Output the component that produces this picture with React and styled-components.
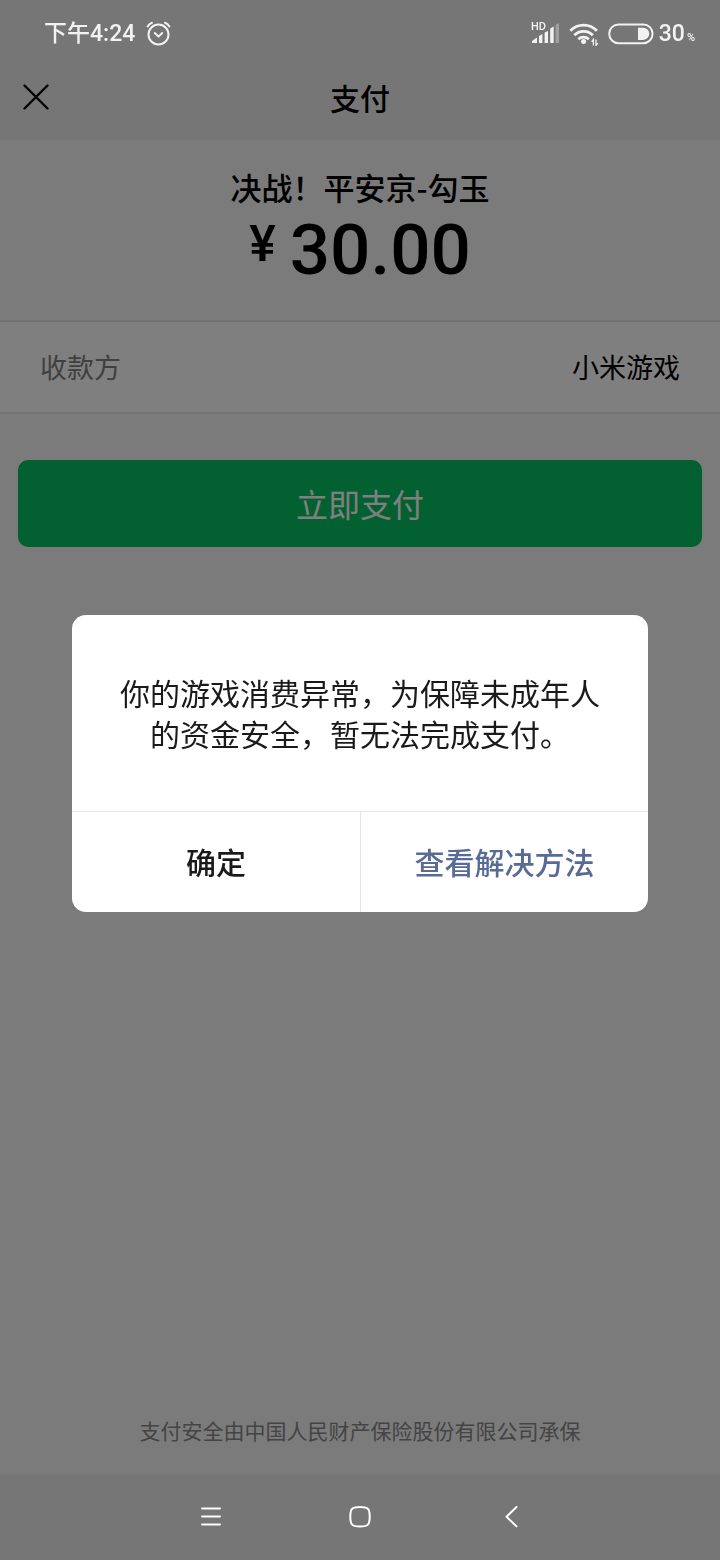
import React, { useState } from 'react'
import styled, { createGlobalStyle } from "styled-components";

const GlobalStyle = createGlobalStyle`
    * {
        box-sizing: border-box;
    }

    body {
        margin: 0;
        background-color: #f6f6f6;
        font-family: "Noto Sans CJK SC", sans-serif;
    }
`


const Page = styled.div`
    min-height: 100vh;
    background-color: #f6f6f6;
    color: #000;

    display: flex;
    flex-direction: column;
`


const StatusBar = styled.div`
    height: 56px;
    padding: 12px 25px 0 44px;
    background-color: #ededed;
    color: #f2f2f2;

    display: flex;
    align-items: center;
    justify-content: space-between;
`


const StatusGroup = styled.div`
    position: relative;
    z-index: 2;

    display: flex;
    align-items: center;
    gap: ${props => props.$gap};
`


const StatusText = styled.span`
    font-family: Roboto, "Noto Sans CJK SC", sans-serif;
    font-size: 23px;
    font-weight: 500;
    line-height: 24px;
`


const Percent = styled(StatusText)`
    font-size: 11px;
    line-height: 16px;
`


const Battery = styled.div`
    display: flex;
    align-items: flex-end;
    gap: 2px;
`


const Header = styled.header`
    height: 84px;
    padding: 0 16px 2px;
    background-color: #ededed;

    display: grid;
    grid-template-columns: 40px 1fr 40px;
    align-items: center;
`


const NakedButton = styled.button`
    padding: 0;
    border: none;
    background: none;
    color: inherit;
    font-family: inherit;
    cursor: pointer;
`


const IconButton = styled(NakedButton)`
    height: 40px;

    display: flex;
    align-items: center;
    justify-content: center;
`


const Title = styled.h1`
    margin: 0;
    font-size: 30px;
    font-weight: 500;
    line-height: 40px;
    text-align: center;
`


const Summary = styled.section`
    padding: 25px 20px 32px;
    text-align: center;
`


const Product = styled.h2`
    margin: 0 0 3px;
    font-size: 31px;
    font-weight: 500;
    line-height: 44px;
`


const Price = styled.div`
    font-family: Roboto, sans-serif;
    font-size: 71px;
    font-weight: 500;
    line-height: 76px;

    display: flex;
    justify-content: center;
    gap: 14px;
`


const Currency = styled.span`
    font-size: 50px;
    line-height: 64px;
`


const Row = styled.dl`
    height: 94px;
    margin: 0;
    padding: 0 40px;
    background-color: #fff;
    border-top: 2px solid #e4e4e4;
    border-bottom: 2px solid #e8e8e8;
    font-size: 27px;
    line-height: 40px;

    display: flex;
    align-items: center;
    justify-content: space-between;
`


const Label = styled.dt`
    color: #808080;
`


const Value = styled.dd`
    margin: 0;
`


const PayButton = styled(NakedButton)`
    height: 87px;
    margin: 46px 18px 0;
    padding-bottom: 2px;
    border-radius: 10px;
    background-color: #07c160;
    color: #fff;
    font-size: 32px;
`


const Footer = styled.footer`
    margin-top: auto;
    padding-bottom: 28px;
    color: #888;
    font-size: 21px;
    line-height: 32px;
    text-align: center;
`


const NavBar = styled.nav`
    height: 86px;
    background-color: #ededed;
    color: #fff;

    display: flex;
    justify-content: center;
    align-items: center;
    gap: 102px;
`


const NavButton = styled(IconButton)`
    position: relative;
    z-index: 2;
    width: 48px;
`


const Overlay = styled.div`
    position: fixed;
    inset: 0;
    z-index: 1;
    padding: 53px 10% 86px;
    background-color: rgba(0, 0, 0, 0.5);

    display: flex;
    align-items: center;
    justify-content: center;
`


const Dialog = styled.div`
    width: 100%;
    border-radius: 14px;
    background-color: #fff;
    color: #1a1a1a;
    overflow: hidden;
`


const Message = styled.p`
    margin: 0;
    padding: 57px 46px;
    font-size: 30px;
    line-height: 41px;
    text-align: center;
`


const Actions = styled.div`
    border-top: 1px solid #e5e5e5;

    display: grid;
    grid-template-columns: 1fr 1fr;
`


const ActionButton = styled(NakedButton)`
    height: 100px;
    padding-bottom: 2px;
    color: ${props => props.$color || "#1a1a1a"};
    font-size: 30px;
    font-weight: 500;

    & + & {
        border-left: 1px solid #e5e5e5;
    }
`


const AlarmIcon = () => (
    <svg width="26" height="26" viewBox="0 0 26 26" fill="none" stroke="currentColor" strokeWidth="2" strokeLinecap="round" strokeLinejoin="round" aria-hidden="true">
        <circle cx="12.5" cy="13.5" r="10" />
        <path d="M8.8 12l3.7 3.6 3.7-3.6" />
        <path d="M1.6 5.4Q3 2.9 6 1.8M23.4 5.4Q22 2.9 19 1.8" />
    </svg>
)

const SignalIcon = () => (
    <svg width="30" height="34" viewBox="0 -5 30 34" fill="currentColor" aria-hidden="true">
        <text x="1" y="8" fontFamily="Roboto, sans-serif" fontSize="11" fontWeight="500">HD</text>
        <path d="M2 21v-2l5-3.5V21zM9 21v-7l3.4-2v9zM14.6 21V10.6L18 9v12zM20.2 21V6.5l3.5-2V21z" />
        <path opacity="0.35" d="M25.6 21V3l3.4-2v20z" />
    </svg>
)

const WifiIcon = () => (
    <svg width="30" height="24" viewBox="0 0 30 24" fill="none" stroke="currentColor" strokeWidth="2.8" aria-hidden="true">
        <path d="M1.3 8.8a18.6 18.6 0 0 1 26.6 0" />
        <path d="M5.3 13.2a13.2 13.2 0 0 1 18.6 0" />
        <path d="M9.3 17.2a8 8 0 0 1 10.6 0" />
        <circle cx="14.6" cy="19.4" r="2.5" fill="currentColor" stroke="none" />
        <path strokeWidth="1.3" d="M24.4 23.5v-6l-1.8 2.4M27 17.5v6l1.8-2.4" />
    </svg>
)

const BatteryIcon = () => (
    <svg width="46" height="22" viewBox="0 0 46 22" fill="none" aria-hidden="true">
        <rect x="1.2" y="1.4" width="43.4" height="18.8" rx="9.4" stroke="currentColor" strokeWidth="2" />
        <path fill="currentColor" d="M30 4.7h5.2a6.1 6.1 0 0 1 0 12.2H30z" />
    </svg>
)

const CloseIcon = () => (
    <svg width="26" height="26" viewBox="0 0 26 26" stroke="currentColor" strokeWidth="2.4" strokeLinecap="round" aria-hidden="true">
        <path d="M1.5 1.5l23 23M24.5 1.5l-23 23" />
    </svg>
)

const MenuIcon = () => (
    <svg width="22" height="22" viewBox="0 0 22 22" stroke="currentColor" strokeWidth="2" strokeLinecap="round" aria-hidden="true">
        <path d="M3 2.5h18M3 10.5h18M3 18.5h18" />
    </svg>
)

const HomeIcon = () => (
    <svg width="22" height="22" viewBox="0 0 22 22" fill="none" stroke="currentColor" strokeWidth="2" aria-hidden="true">
        <path d="M11 1c8 0 9.7 1.6 9.7 9.7s-1.7 9.7-9.7 9.7-9.7-1.6-9.7-9.7S3 1 11 1z" />
    </svg>
)

const BackIcon = () => (
    <svg width="22" height="22" viewBox="0 0 22 22" fill="none" stroke="currentColor" strokeWidth="2" strokeLinecap="round" strokeLinejoin="round" aria-hidden="true">
        <path d="M17.5 1l-10 9.7 10 9.7" />
    </svg>
)


const App = () => {
    const [open, setOpen] = useState(true)

    return (
        <>
            <GlobalStyle />
            <Page>
                <StatusBar>
                    <StatusGroup $gap="11px">
                        <StatusText>下午4:24</StatusText>
                        <AlarmIcon />
                    </StatusGroup>
                    <StatusGroup $gap="9px">
                        <SignalIcon />
                        <WifiIcon />
                        <StatusGroup $gap="5px">
                            <BatteryIcon />
                            <Battery>
                                <StatusText>30</StatusText>
                                <Percent>%</Percent>
                            </Battery>
                        </StatusGroup>
                    </StatusGroup>
                </StatusBar>
                <Header>
                    <IconButton aria-label="关闭"><CloseIcon /></IconButton>
                    <Title>支付</Title>
                </Header>
                <Summary>
                    <Product>决战！平安京-勾玉</Product>
                    <Price><Currency>¥</Currency>30.00</Price>
                </Summary>
                <Row>
                    <Label>收款方</Label>
                    <Value>小米游戏</Value>
                </Row>
                <PayButton onClick={() => setOpen(true)}>立即支付</PayButton>
                <Footer>支付安全由中国人民财产保险股份有限公司承保</Footer>
                <NavBar>
                    <NavButton aria-label="菜单"><MenuIcon /></NavButton>
                    <NavButton aria-label="主页"><HomeIcon /></NavButton>
                    <NavButton aria-label="返回"><BackIcon /></NavButton>
                </NavBar>
            </Page>
            {open && (
                <Overlay>
                    <Dialog role="dialog" aria-modal="true">
                        <Message>你的游戏消费异常，为保障未成年人的资金安全，暂无法完成支付。</Message>
                        <Actions>
                            <ActionButton onClick={() => setOpen(false)}>确定</ActionButton>
                            <ActionButton $color="#576b95">查看解决方法</ActionButton>
                        </Actions>
                    </Dialog>
                </Overlay>
            )}
        </>
    )
}

export default App
